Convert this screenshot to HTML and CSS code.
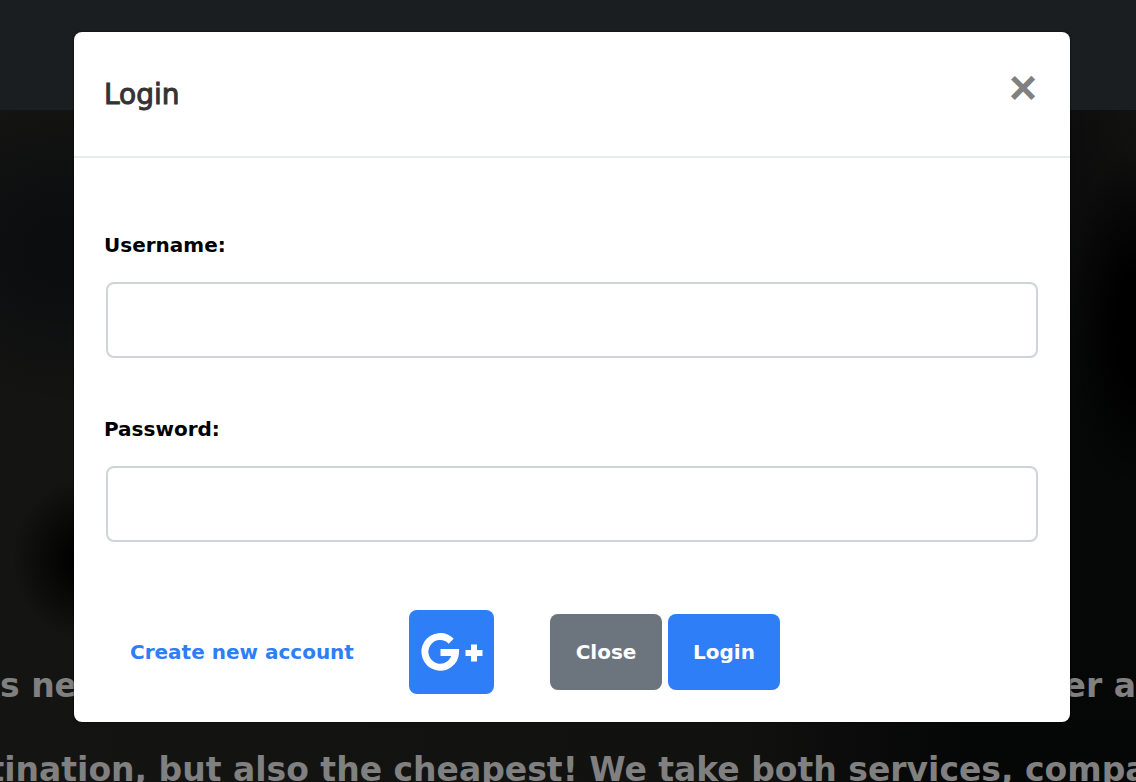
FILE: index.html
```html
<!DOCTYPE html>
<html lang="en">
<head>
<meta charset="utf-8">
<title>Login</title>
<meta name="viewport" content="width=device-width, initial-scale=1">
<link rel="stylesheet" href="styles.css">
</head>
<body class="page">
<div class="backdrop">
  <div class="navbar"></div>
  <div class="hero">
    <p class="hero-line hero-split"><span>s ne</span><span>er a</span></p>
    <p class="hero-line">tination, but also the cheapest! We take both services, compa</p>
  </div>
</div>
<main class="modal" role="dialog" aria-labelledby="modal-title">
  <header class="modal-header">
    <h1 class="modal-title" id="modal-title">Login</h1>
    <button class="dismiss" type="button" aria-label="Dismiss">×</button>
  </header>
  <form class="modal-form">
    <label class="label" for="username">Username:</label>
    <input class="field" id="username" type="text">
    <label class="label" for="password">Password:</label>
    <input class="field" id="password" type="password">
    <div class="actions">
      <a class="create" href="#">Create new account</a>
      <button class="google" type="button" aria-label="Sign in with Google+">
        <svg class="google-icon" viewBox="0 0 62 40" aria-hidden="true">
          <path d="M30.200 9.200A15.300 15.300 0 1 0 34.500 20.500H19.500" fill="none" stroke="#fff" stroke-width="7"/>
          <path d="M44.500 18h5.500v-5.500h6v5.500h5.500v6h-5.500v5.500h-6V24h-5.500z" fill="#fff"/>
        </svg>
      </button>
      <div class="buttons">
        <button class="btn btn-close" type="button">Close</button>
        <button class="btn btn-login" type="submit">Login</button>
      </div>
    </div>
  </form>
</main>
</body>
</html>
```
FILE: styles.css
```css
* { box-sizing: border-box; }
.page {
  margin: 0;
  min-height: 100vh;
  padding: 32px 66px 60px 74px;
  background: #0c0c0c;
  font-family: "DejaVu Sans", sans-serif;
  font-size: 20px;
  overflow: hidden;
}
.backdrop {
  position: absolute;
  inset: 0;
  display: flex;
  flex-direction: column;
  overflow: hidden;
}
.navbar { flex: none; height: 110px; background: #1a1e21; }
.hero {
  flex: none;
  display: flex;
  flex-direction: column;
  align-items: center;
  padding-top: 534px;
  background:
    radial-gradient(ellipse 70px 180px at 100% 31%, #000 30%, transparent 100%),
    radial-gradient(ellipse 70px 80px at 82px 64%, #000 10%, transparent 100%),
    radial-gradient(ellipse 160px 150px at 60px 20%, #0b0d0f 20%, transparent 100%),
    linear-gradient(90deg, #141412 0%, #111110 65%, #050606 85%, transparent 100%),
    linear-gradient(#121211 0%, #070808 40%, #050606 100%);
}
.hero-line {
  margin: 0;
  line-height: 84px;
  font-size: 33px;
  font-weight: 700;
  color: #808080;
  white-space: nowrap;
}
.hero-split { align-self: stretch; display: flex; justify-content: space-between; }
.modal {
  position: relative;
  background: #fff;
  border-radius: 8px;
  box-shadow: 0 0 2px #000;
}
.modal-header {
  display: flex;
  justify-content: space-between;
  align-items: flex-start;
  padding: 32px 33px 30px 30px;
  border-bottom: 2px solid #e9ecef;
}
.modal-title {
  margin: 0;
  font-size: 28px;
  line-height: 62px;
  font-weight: 400;
  color: #333;
  -webkit-text-stroke: 1px #333;
}
.dismiss {
  border: 0;
  padding: 0;
  background: none;
  color: #808080;
  font: 700 48px/48px "Liberation Sans", sans-serif;
}
.modal-form { padding: 64px 30px 28px; display: flex; flex-direction: column; }
.label { line-height: 46px; font-weight: 700; color: #000; }
.field {
  height: 76px;
  margin: 14px 2px 48px;
  padding: 0 24px;
  border: 2px solid #ced4da;
  border-radius: 8px;
  background: #fff;
  font: inherit;
}
.actions { display: flex; align-items: center; padding-top: 20px; }
.create {
  width: 305px;
  padding-left: 26px;
  color: #2d7ef7;
  font-weight: 700;
  text-decoration: none;
  white-space: nowrap;
}
.google {
  width: 85px;
  height: 84px;
  padding: 0;
  border: 0;
  border-radius: 8px;
  background: #2d7ef7;
}
.google-icon { display: block; width: 62px; height: 40px; margin: 0 auto; overflow: visible; }
.buttons { display: flex; gap: 6px; margin-left: 56px; }
.btn {
  width: 112px;
  height: 76px;
  padding: 0;
  border: 0;
  border-radius: 8px;
  color: #fff;
  font: inherit;
  font-weight: 700;
}
.btn-close { background: #6c757d; }
.btn-login { background: #2d7ef7; }
```
